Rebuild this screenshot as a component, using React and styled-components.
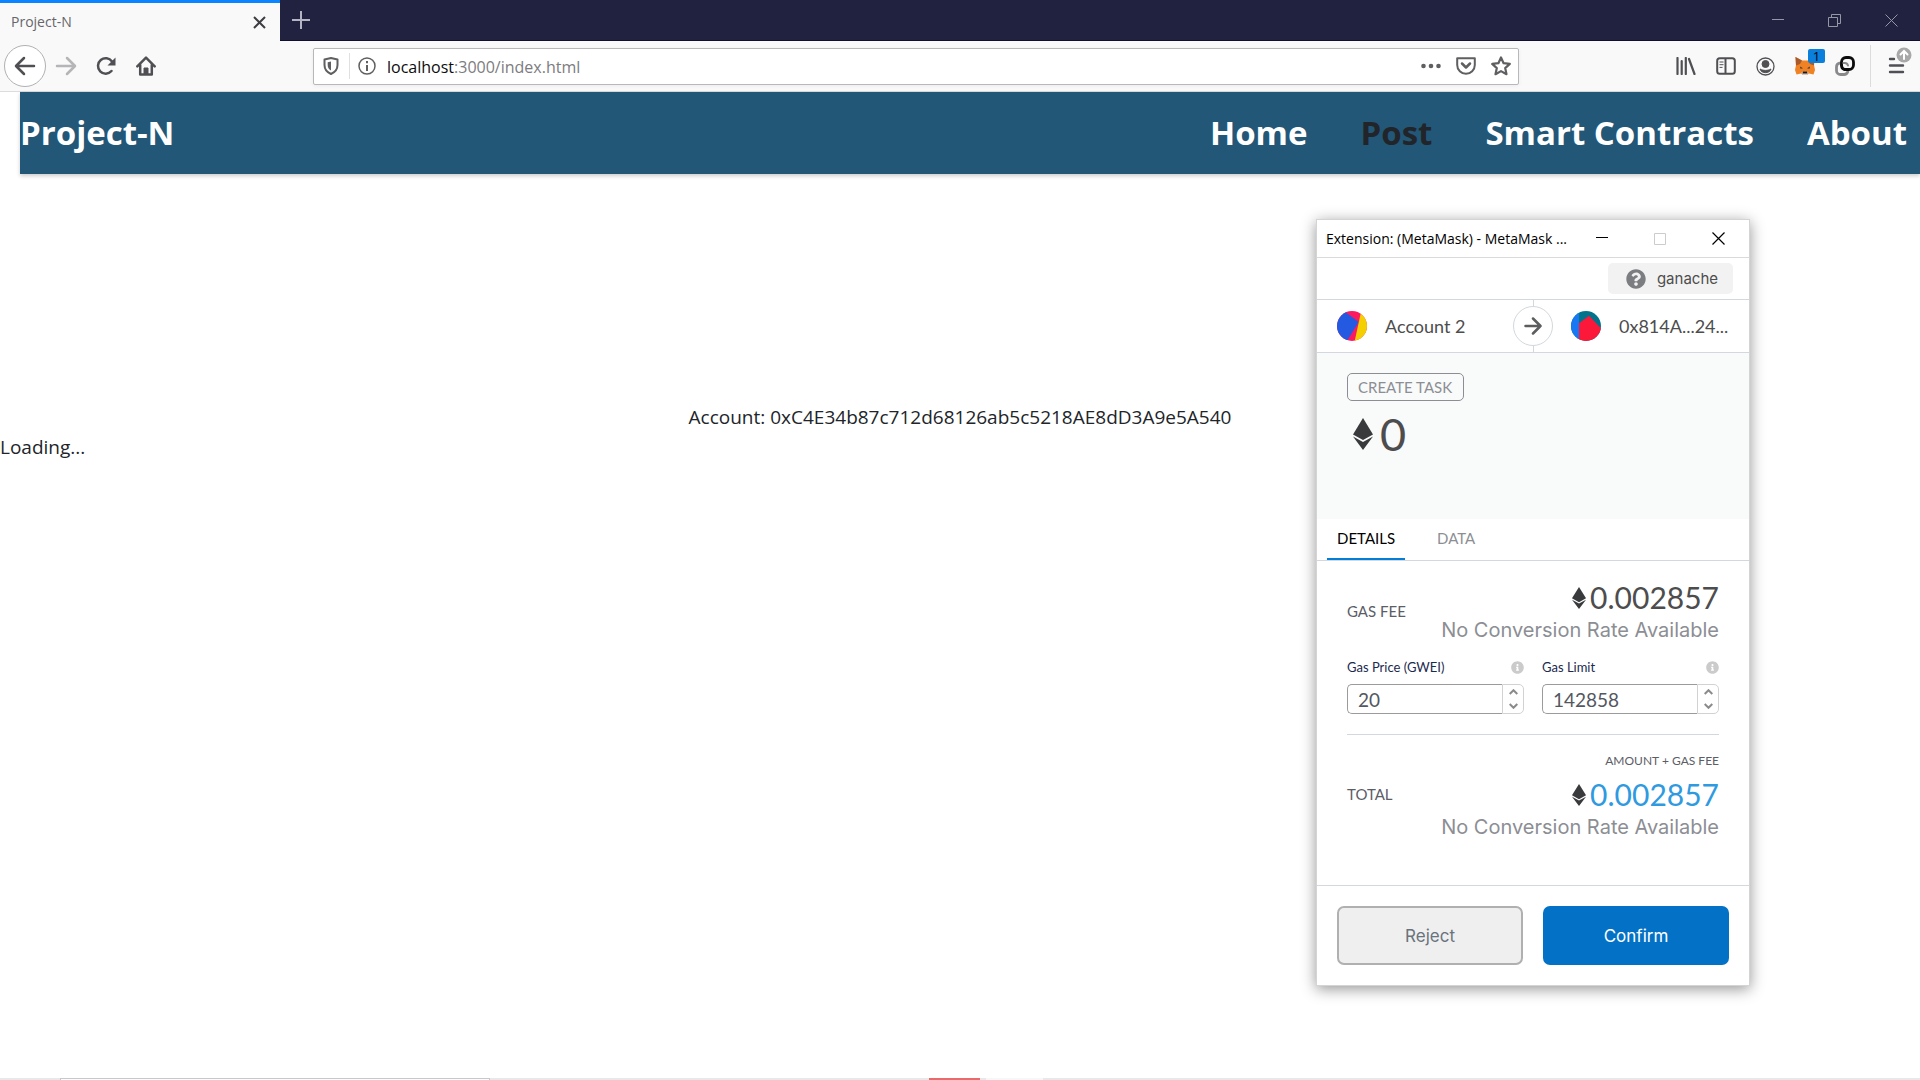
import React, { useState } from 'react';
import styled, { createGlobalStyle } from 'styled-components';

import { FaQuestionCircle, FaInfoCircle } from 'react-icons/fa';

const navLinks = ['Home', 'Post', 'Smart Contracts', 'About'];

const account = '0xC4E34b87c712d68126ab5c5218AE8dD3A9e5A540';

const EtherIcon = ({ width, height }) => (
  <svg width={width} height={height} viewBox="0 0 20 32" fill="#393a3b" preserveAspectRatio="none">
    <path d="M10 0l10 16.500L10 22 0 16.500z" />
    <path d="M0 18.500l10 5.500 10-5.500L10 32z" />
  </svg>
);

const BrowserTabs = () => (
  <TabBar>
    <ActiveTab>
      <TabTitle>Project-N</TabTitle>
      <IconButton aria-label="Close tab">
        <svg width="13" height="13" viewBox="0 0 13 13" fill="none" stroke="#3e3e42" strokeWidth="2">
          <path d="M1 1l11 11M12 1L1 12" />
        </svg>
      </IconButton>
    </ActiveTab>
    <NewTab aria-label="New tab">
      <svg width="18" height="18" viewBox="0 0 18 18" fill="none" stroke="#b4b4c2" strokeWidth="2">
        <path d="M9 0v18M0 9h18" />
      </svg>
    </NewTab>
    <WindowControls>
      <ControlButton aria-label="Minimize">
        <svg width="12" height="13" viewBox="0 0 12 13" stroke="#9596a6">
          <path d="M0 5.500h12" />
        </svg>
      </ControlButton>
      <ControlButton aria-label="Restore">
        <svg width="13" height="13" viewBox="0 0 13 13" fill="none" stroke="#9596a6">
          <path d="M.5 3.500h9v9h-9zM3.500 3.500v-3h9v9h-3" />
        </svg>
      </ControlButton>
      <ControlButton aria-label="Close">
        <svg width="13" height="13" viewBox="0 0 13 13" fill="none" stroke="#9596a6">
          <path d="M.5.5l12 12M12.500.5l-12 12" />
        </svg>
      </ControlButton>
    </WindowControls>
  </TabBar>
);

const BrowserToolbar = () => (
  <Toolbar>
    <NavButtons>
      <BackButton aria-label="Back">
        <svg width="22" height="20" viewBox="0 0 22 20" fill="none" stroke="#505054" strokeWidth="2.500" strokeLinecap="round" strokeLinejoin="round">
          <path d="M20 10H3M10 2L2 10l8 8" />
        </svg>
      </BackButton>
      <ToolButton aria-label="Forward">
        <svg width="22" height="20" viewBox="0 0 22 20" fill="none" stroke="#b5b5b7" strokeWidth="2.500" strokeLinecap="round" strokeLinejoin="round">
          <path d="M2 10h17M12 2l8 8-8 8" />
        </svg>
      </ToolButton>
      <ToolButton aria-label="Reload">
        <svg width="20" height="20" viewBox="0 0 20 20" fill="none" stroke="#505054" strokeWidth="2.500" strokeLinecap="round">
          <path d="M15.500 15A7.700 7.700 0 1 1 16 5.500" />
          <path d="M19.500 1.500v8h-8z" fill="#505054" stroke="none" />
        </svg>
      </ToolButton>
      <ToolButton aria-label="Home">
        <svg width="20" height="20" viewBox="0 0 20 20" fill="none" stroke="#505054" strokeWidth="2.500" strokeLinecap="round" strokeLinejoin="round">
          <path d="M1.300 10.300L10 1.600l8.700 8.700M4.200 9v9.500h11.600V9" />
          <path d="M8 18v-6h4v6z" fill="#505054" strokeWidth="1" />
        </svg>
      </ToolButton>
    </NavButtons>
    <UrlBar>
      <IconButton aria-label="Tracking protection">
        <svg width="16" height="18" viewBox="0 0 16 18" fill="none" stroke="#5f5f62" strokeWidth="2" strokeLinejoin="round">
          <path d="M8 1l6.500 1.500V8c0 4.500-2 7-6.500 9-4.500-2-6.500-4.500-6.500-9V2.500z" />
          <path d="M8 4.500v9c-2.300-1.300-3.300-3-3.300-5.500V5.200z" fill="#5f5f62" stroke="none" />
        </svg>
      </IconButton>
      <UrlDivider />
      <IconButton aria-label="Site information">
        <svg width="18" height="18" viewBox="0 0 18 18" fill="none" stroke="#5f5f62">
          <circle cx="9" cy="9" r="8" strokeWidth="1.500" />
          <path d="M9 8v6M9 4v2.200" strokeWidth="2" />
        </svg>
      </IconButton>
      <UrlText>
        <b>localhost</b>:3000/index.html
      </UrlText>
      <UrlActions>
        <IconButton aria-label="Page actions">
          <svg width="20" height="6" viewBox="0 0 20 6" fill="#5f5f62">
            <circle cx="2.500" cy="3" r="2.300" />
            <circle cx="10" cy="3" r="2.300" />
            <circle cx="17.500" cy="3" r="2.300" />
          </svg>
        </IconButton>
        <IconButton aria-label="Save to Pocket">
          <svg width="20" height="18" viewBox="0 0 20 18" fill="none" stroke="#5f5f62" strokeWidth="2" strokeLinecap="round" strokeLinejoin="round">
            <path d="M1.200 1.200h17.600V8c0 5-4 8.800-8.800 8.800S1.200 13 1.200 8z" />
            <path d="M6 6.500l4 4 4-4" strokeWidth="2.500" />
          </svg>
        </IconButton>
        <IconButton aria-label="Bookmark this page">
          <svg width="20" height="20" viewBox="0 0 20 20" fill="none" stroke="#5f5f62" strokeWidth="2.200" strokeLinejoin="round">
            <path d="M10 1.500l2.600 5.700 6.200.7-4.600 4.200 1.300 6.100L10 15.100l-5.500 3.100 1.300-6.100L1.200 7.900l6.200-.7z" />
          </svg>
        </IconButton>
      </UrlActions>
    </UrlBar>
    <Extensions>
      <IconButton aria-label="Library">
        <svg width="20" height="18" viewBox="0 0 20 18" fill="none" stroke="#505054" strokeWidth="2.200" strokeLinecap="round">
          <path d="M1.500 1v16M5.700 4v13M9.800 1v16M13 2l5.500 15" />
        </svg>
      </IconButton>
      <IconButton aria-label="Sidebars">
        <svg width="20" height="18" viewBox="0 0 20 18" fill="none" stroke="#505054" strokeWidth="2">
          <rect x="1.200" y="1.200" width="17.600" height="15.600" rx="2.500" />
          <path d="M9.500 1v16" />
          <path d="M3.500 5h4M3.500 7.700h4M3.500 10.400h3" strokeWidth="1" />
        </svg>
      </IconButton>
      <IconButton aria-label="Account">
        <svg width="19" height="19" viewBox="0 0 19 19" fill="none" stroke="#505054">
          <circle cx="9.500" cy="9.500" r="8.500" strokeWidth="1.300" />
          <circle cx="9.500" cy="7" r="3.500" fill="#505054" />
          <path d="M4 12c2 1 3.500 1.400 5.500 1.400S13 13 15 12c-.7 2.500-3 3.700-5.500 3.700S4.700 14.500 4 12z" fill="#505054" />
        </svg>
      </IconButton>
      <WalletButton aria-label="MetaMask">
        <svg width="20" height="18" viewBox="0 0 20 18">
          <path d="M.5 0L7 3.500h6L19.500 0 19 8l1 5-1.500 4.500-4.500-1-2 1.500H8l-2-1.500-4.500 1L0 13l1-5z" fill="#f08223" />
          <path d="M.5 0L7 3.500 5 7 1 8.500zM19.500 0L13 3.500l2 3.500 4 1.500z" fill="#a85a2c" />
          <path d="M5 9.500l3 1.700-2.500.5zM15 9.500l-3 1.700 2.500.5z" fill="#333a4a" />
          <path d="M6 16l2-1.500h4l2 1.500-2 2H8z" fill="#d8c6b8" />
          <path d="M8 14.500h4l.5 2h-5z" fill="#201b1a" />
        </svg>
        <WalletBadge>1</WalletBadge>
      </WalletButton>
      <IconButton aria-label="Containers">
        <svg width="20" height="20" viewBox="0 0 20 20" fill="none" strokeWidth="2.800" strokeLinecap="round">
          <path d="M4.500 7.200A4 4 0 0 0 1.500 11v3.500a4 4 0 0 0 4 4H9a4 4 0 0 0 3.800-2.700" stroke="#88898b" />
          <path d="M9.500 13.500H14A4.500 4.500 0 0 0 18.500 9V6A4.500 4.500 0 0 0 14 1.500h-3A4.500 4.500 0 0 0 6.500 6v3" stroke="#0c0c0d" />
          <path d="M6.500 9a4.500 4.500 0 0 0 3 4.500" stroke="#0c0c0d" />
          <path d="M8.500 7h1.300a3.500 3.500 0 0 1 3.200 2.500" stroke="#88898b" strokeWidth="2" />
        </svg>
      </IconButton>
      <ToolbarDivider />
      <MenuButton aria-label="Open menu">
        <svg width="24" height="28" viewBox="0 0 24 28" fill="none" stroke="#505054" strokeWidth="2.400" strokeLinecap="round">
          <path d="M2 12h4M2 18.500h13M2 25h13" />
          <circle cx="16" cy="8" r="7.500" fill="#a8a8a9" stroke="none" />
          <path d="M16 12V4.500M12.500 7.500L16 4l3.500 3.500" stroke="#fff" strokeWidth="2" />
        </svg>
      </MenuButton>
    </Extensions>
  </Toolbar>
);

const GasField = ({ id, label, initial }) => {
  const [value, setValue] = useState(initial);
  const step = (amount) => setValue(String(Number(value) + amount));

  return (
    <Field>
      <FieldHead>
        <FieldLabel htmlFor={id}>{label}</FieldLabel>
        <FaInfoCircle size={13} color="#cbcbcb" />
      </FieldHead>
      <FieldBox>
        <FieldInput id={id} value={value} onChange={(e) => setValue(e.target.value)} />
        <Stepper>
          <StepButton aria-label={`Increase ${label}`} onClick={() => step(1)}>
            <svg width="9" height="6" viewBox="0 0 9 6" fill="none" stroke="#8b8b8b" strokeWidth="2">
              <path d="M.7 5l3.800-3.800L8.300 5" />
            </svg>
          </StepButton>
          <StepButton aria-label={`Decrease ${label}`} onClick={() => step(-1)}>
            <svg width="9" height="6" viewBox="0 0 9 6" fill="none" stroke="#8b8b8b" strokeWidth="2">
              <path d="M.7 1l3.800 3.800L8.300 1" />
            </svg>
          </StepButton>
        </Stepper>
      </FieldBox>
    </Field>
  );
};

const FeeRow = ({ title, hint, amount, highlight }) => (
  <Fee $spaced={Boolean(hint)}>
    <FeeTitle>{title}</FeeTitle>
    <div>
      {hint && <FeeHint>{hint}</FeeHint>}
      <FeeAmount $highlight={highlight}>
        <EtherIcon width={14} height={22} />
        {amount}
      </FeeAmount>
      <FeeNote>No Conversion Rate Available</FeeNote>
    </div>
  </Fee>
);

const MetaMaskPopup = () => (
  <Popup>
    <PopupBar>
      <PopupTitle>Extension: (MetaMask) - MetaMask ...</PopupTitle>
      <PopupControl aria-label="Minimize popup">
        <svg width="12" height="13" viewBox="0 0 12 13" stroke="#000">
          <path d="M0 5.500h12" />
        </svg>
      </PopupControl>
      <PopupControl aria-label="Maximize popup" disabled>
        <svg width="12" height="12" viewBox="0 0 12 12" fill="none" stroke="#cccccc">
          <path d="M.5.5h11v11H.5z" />
        </svg>
      </PopupControl>
      <PopupControl aria-label="Close popup">
        <svg width="13" height="13" viewBox="0 0 13 13" fill="none" stroke="#000" strokeWidth="1.200">
          <path d="M.5.5l12 12M12.500.5l-12 12" />
        </svg>
      </PopupControl>
    </PopupBar>
    <NetworkRow>
      <Network>
        <FaQuestionCircle size={20} color="#7b7d80" />
        ganache
      </Network>
    </NetworkRow>
    <SenderRow>
      <Party>
        <Avatar viewBox="0 0 30 30">
          <rect width="30" height="30" fill="#fc1960" />
          <path d="M0 0h7l14.700 11L10 30H0z" fill="#235ae1" />
          <path d="M24.200 0H30v30H17.700z" fill="#f5d000" />
        </Avatar>
        Account 2
      </Party>
      <ArrowCircle>
        <svg width="18" height="18" viewBox="0 0 18 18" fill="none" stroke="#5b5d5f" strokeWidth="2.500" strokeLinecap="round" strokeLinejoin="round">
          <path d="M1.500 9h15M9 1.500L16.500 9 9 16.500" />
        </svg>
      </ArrowCircle>
      <Party $recipient>
        <Avatar viewBox="0 0 30 30">
          <rect width="30" height="30" fill="#03738c" />
          <path d="M8 12.300l10-7.600 12 12.600V30H8z" fill="#fb1839" />
          <path d="M0 0h8v30H0z" fill="#1877f2" />
        </Avatar>
        0x814A...24...
      </Party>
    </SenderRow>
    <Summary>
      <Action>CREATE TASK</Action>
      <SummaryAmount>
        <EtherIcon width={20} height={32} />0
      </SummaryAmount>
    </Summary>
    <Tabs>
      <Tab $active>DETAILS</Tab>
      <Tab>DATA</Tab>
    </Tabs>
    <Details>
      <FeeRow title="GAS FEE" amount="0.002857" />
      <GasFields>
        <GasField id="gas-price" label="Gas Price (GWEI)" initial="20" />
        <GasField id="gas-limit" label="Gas Limit" initial="142858" />
      </GasFields>
      <FeeRow title="TOTAL" hint="AMOUNT + GAS FEE" amount="0.002857" highlight />
    </Details>
    <PopupFooter>
      <FooterButton>Reject</FooterButton>
      <FooterButton $primary>Confirm</FooterButton>
    </PopupFooter>
  </Popup>
);

const App = () => (
  <Screen>
    <GlobalStyle />
    <BrowserTabs />
    <BrowserToolbar />
    <Navbar>
      <Brand href="#home">Project-N</Brand>
      <NavList>
        {navLinks.map((name) => (
          <NavLink key={name} href="#nav" $active={name === 'Post'}>
            {name}
          </NavLink>
        ))}
      </NavList>
    </Navbar>
    <Content>
      <Address>Account: {account}</Address>
      <p>Loading...</p>
    </Content>
    <MetaMaskPopup />
    <BottomStrip>
      <StripBox />
      <StripAlert />
      <StripLight />
    </BottomStrip>
  </Screen>
);

export default App;

const GlobalStyle = createGlobalStyle`
  * {
    box-sizing: border-box;
  }

  body {
    margin: 0;
    background: #fff;
    color: #212529;
    font-family: 'Open Sans', sans-serif;
  }

  p {
    margin: 0;
  }

  button {
    padding: 0;
    border: 0;
    background: none;
    color: inherit;
    font: inherit;
  }

  svg {
    display: block;
    flex: none;
  }
`;

const Screen = styled.div`
  position: relative;
  display: flex;
  flex-direction: column;
  min-height: 100vh;
`;

const TabBar = styled.div`
  display: flex;
  height: 41px;
  background: #20223f;
`;

const ActiveTab = styled.div`
  display: flex;
  align-items: center;
  justify-content: space-between;
  width: 280px;
  padding: 0 14px 0 11px;
  border-top: 3px solid #0a84ff;
  background: #f9f9fa;
`;

const TabTitle = styled.span`
  padding-bottom: 2px;
  color: #66666a;
  font-size: 14px;
`;

const IconButton = styled.button`
  display: flex;
  align-items: center;
  justify-content: center;
`;

const NewTab = styled(IconButton)`
  width: 42px;
  border-bottom: 1px solid #0f1030;
`;

const WindowControls = styled.div`
  display: flex;
  flex: 1;
  justify-content: flex-end;
  border-bottom: 1px solid #0f1030;
`;

const ControlButton = styled(IconButton)`
  width: 57px;
`;

const Toolbar = styled.div`
  display: flex;
  align-items: center;
  height: 51px;
  border-bottom: 1px solid #dcdcdd;
  background: #f9f9fa;
`;

const NavButtons = styled.div`
  display: flex;
  align-items: center;
  width: 313px;
  padding-left: 4px;
`;

const BackButton = styled(IconButton)`
  width: 42px;
  height: 42px;
  border: 1px solid #b1b1b3;
  border-radius: 50%;
  background: #fff;
`;

const ToolButton = styled(IconButton)`
  width: 40px;
  height: 40px;
`;

const UrlBar = styled.div`
  display: flex;
  flex: 1;
  align-items: center;
  height: 37px;
  padding: 0 7px 0 9px;
  border: 1px solid #b8b8ba;
  border-radius: 2px;
  background: #fff;
  box-shadow: 0 1px 4px rgba(0, 0, 0, 0.06);
`;

const UrlDivider = styled.span`
  width: 1px;
  height: 26px;
  margin: 0 8px 0 10px;
  background: #e0e0e1;
`;

const UrlText = styled.span`
  flex: 1;
  padding: 2px 0 0 11px;
  color: #7c7c80;
  font-size: 16px;

  b {
    color: #0c0c0d;
    font-weight: 400;
  }
`;

const UrlActions = styled.div`
  display: flex;
  align-items: center;
  gap: 15px;
`;

const Extensions = styled.div`
  display: flex;
  align-items: center;
  justify-content: flex-end;
  gap: 20px;
  width: 401px;
  height: 100%;
  padding-right: 8px;
`;

const WalletButton = styled(IconButton)`
  position: relative;
`;

const WalletBadge = styled.span`
  position: absolute;
  top: -8px;
  left: 13px;
  width: 17px;
  height: 14px;
  border-radius: 2px;
  background: #0a7fdc;
  color: #000;
  font-size: 13px;
  line-height: 14px;
  text-align: center;
`;

const ToolbarDivider = styled.span`
  width: 1px;
  height: 42px;
  margin: 0 -3px 0 -5px;
  background: #dcdcdd;
`;

const MenuButton = styled(IconButton)`
  align-self: flex-start;
  padding-top: 6px;
`;

const Navbar = styled.nav`
  display: flex;
  align-items: center;
  justify-content: space-between;
  height: 82px;
  margin-left: 20px;
  padding: 0 13px 2px 0;
  background: #225778;
  box-shadow: 0 2px 4px rgba(0, 0, 0, 0.2);
`;

const Brand = styled.a`
  color: #fff;
  font-size: 33px;
  font-weight: 700;
  text-decoration: none;
`;

const NavList = styled.div`
  display: flex;
  gap: 53px;
`;

const NavLink = styled(Brand)`
  color: ${({ $active }) => ($active ? '#212529' : '#fff')};
`;

const Content = styled.main`
  flex: 1;
  padding-top: 228px;
  font-size: 19px;
  line-height: 30px;
`;

const Address = styled.p`
  text-align: center;
`;

const Popup = styled.section`
  position: absolute;
  top: 219px;
  right: 170px;
  width: 434px;
  border: 1px solid #d4d4d4;
  background: #fff;
  box-shadow: 0 3px 14px rgba(0, 0, 0, 0.42);
  color: #4d4d4d;
  font-family: 'Lato', sans-serif;
`;

const PopupBar = styled.header`
  display: flex;
  align-items: center;
  height: 38px;
  padding-right: 2px;
  border-bottom: 1px solid #d8dadc;
`;

const PopupTitle = styled.h2`
  flex: 1;
  margin: 0;
  padding-left: 9px;
  color: #000;
  font-family: 'Open Sans', sans-serif;
  font-size: 14px;
  font-weight: 400;
  white-space: nowrap;
`;

const PopupControl = styled(IconButton)`
  width: 58px;
  height: 37px;
`;

const NetworkRow = styled.div`
  display: flex;
  align-items: center;
  justify-content: flex-end;
  height: 42px;
  padding-right: 16px;
  border-bottom: 1px solid #d2d8dd;
`;

const Network = styled.div`
  display: flex;
  align-items: center;
  gap: 11px;
  height: 31px;
  padding: 0 15px 0 18px;
  border-radius: 5px;
  background: #f2f2f2;
  font-family: 'Inter', sans-serif;
  font-size: 15px;
`;

const SenderRow = styled.div`
  display: flex;
  align-items: center;
  height: 53px;
  padding-right: 2px;
  border-bottom: 1px solid #d2d8dd;
  background: linear-gradient(#d2d8dd, #d2d8dd) center / 1px 100% no-repeat;
`;

const Party = styled.div`
  display: flex;
  flex: 1;
  align-items: center;
  gap: 18px;
  padding-left: ${({ $recipient }) => ($recipient ? '18px' : '20px')};
  font-size: 18px;
`;

const Avatar = styled.svg`
  width: 30px;
  height: 30px;
  border-radius: 50%;
`;

const ArrowCircle = styled.div`
  display: flex;
  align-items: center;
  justify-content: center;
  width: 40px;
  height: 40px;
  border: 1px solid #d2d8dd;
  border-radius: 50%;
  background: #fff;
`;

const Summary = styled.div`
  display: flex;
  flex-direction: column;
  align-items: flex-start;
  height: 166px;
  padding: 20px 30px;
  background: #f9fafa;
`;

const Action = styled.span`
  height: 28px;
  padding: 0 11px 0 10px;
  border: 1px solid #8c8e94;
  border-radius: 5px;
  color: #8c8e94;
  font-size: 15px;
  line-height: 26px;
`;

const SummaryAmount = styled.div`
  display: flex;
  align-items: center;
  gap: 7px;
  margin-top: 8px;
  padding-left: 6px;
  font-size: 45px;
  line-height: 50px;
`;

const Tabs = styled.div`
  display: flex;
  gap: 22px;
  height: 42px;
  padding-left: 10px;
  border-bottom: 1px solid #d2d8dd;
`;

const Tab = styled.button`
  padding: 0 10px 2px;
  border-bottom: 2px solid ${({ $active }) => ($active ? '#037dd6' : 'transparent')};
  color: ${({ $active }) => ($active ? '#000' : '#8c8e94')};
  font-size: 15px;
`;

const Details = styled.div`
  height: 325px;
  padding: 18px 30px 0;
  border-bottom: 1px solid #d2d8dd;
`;

const Fee = styled.div`
  display: flex;
  align-items: center;
  justify-content: space-between;
  padding-top: ${({ $spaced }) => ($spaced ? '14px' : '0')};
`;

const FeeTitle = styled.span`
  padding-bottom: 2px;
  color: #5b5d67;
  font-size: 15px;
`;

const FeeHint = styled.p`
  margin-bottom: 3px;
  color: #5b5d67;
  font-size: 12px;
  line-height: 24px;
  text-align: right;
`;

const FeeAmount = styled.div`
  display: flex;
  align-items: center;
  justify-content: flex-end;
  gap: 4px;
  color: ${({ $highlight }) => ($highlight ? '#2f9ae0' : '#4d4d4d')};
  font-size: 30px;
  line-height: 37px;
`;

const FeeNote = styled.p`
  color: #8c8e94;
  font-family: 'Inter', sans-serif;
  font-size: 20px;
  line-height: 28px;
`;

const GasFields = styled.div`
  display: flex;
  gap: 18px;
  padding: 13px 0 20px;
  border-bottom: 1px solid #d2d8dd;
`;

const Field = styled.div`
  flex: 1;
  min-width: 0;
`;

const FieldHead = styled.div`
  display: flex;
  align-items: center;
  justify-content: space-between;
  height: 20px;
`;

const FieldLabel = styled.label`
  color: #1b2a4e;
  font-size: 13px;
`;

const FieldBox = styled.div`
  display: flex;
  height: 30px;
  margin-top: 7px;
`;

const FieldInput = styled.input`
  flex: 1;
  min-width: 0;
  padding: 0 10px;
  border: 1px solid #9b9b9b;
  border-right: 0;
  border-radius: 5px 0 0 5px;
  background: #fff;
  color: #535761;
  font-family: 'Lato', sans-serif;
  font-size: 19px;
  outline: 0;
`;

const Stepper = styled.div`
  display: flex;
  flex-direction: column;
  width: 22px;
  border: 1px solid #d2d2d2;
  border-radius: 0 5px 5px 0;
`;

const StepButton = styled(IconButton)`
  flex: 1;
`;

const PopupFooter = styled.footer`
  display: flex;
  gap: 20px;
  padding: 20px;
`;

const FooterButton = styled.button`
  flex: 1;
  height: 59px;
  border: 2px solid ${({ $primary }) => ($primary ? '#0372c6' : '#b0b0b0')};
  border-radius: 7px;
  background: ${({ $primary }) => ($primary ? '#0372c6' : '#efefef')};
  color: ${({ $primary }) => ($primary ? '#fff' : '#6a737d')};
  font-family: 'Inter', sans-serif;
  font-size: 17px;
`;

const BottomStrip = styled.div`
  display: flex;
  height: 2px;
  padding-left: 60px;
  background: #e8e8e8;
`;

const StripBox = styled.div`
  width: 430px;
  margin-right: 439px;
  border: 1px solid #c8c8c8;
  border-bottom: 0;
  background: #fff;
`;

const StripAlert = styled.div`
  width: 51px;
  margin-right: 6px;
  background: #e96a6a;
`;

const StripLight = styled.div`
  width: 57px;
  background: #f7f7f7;
`;
